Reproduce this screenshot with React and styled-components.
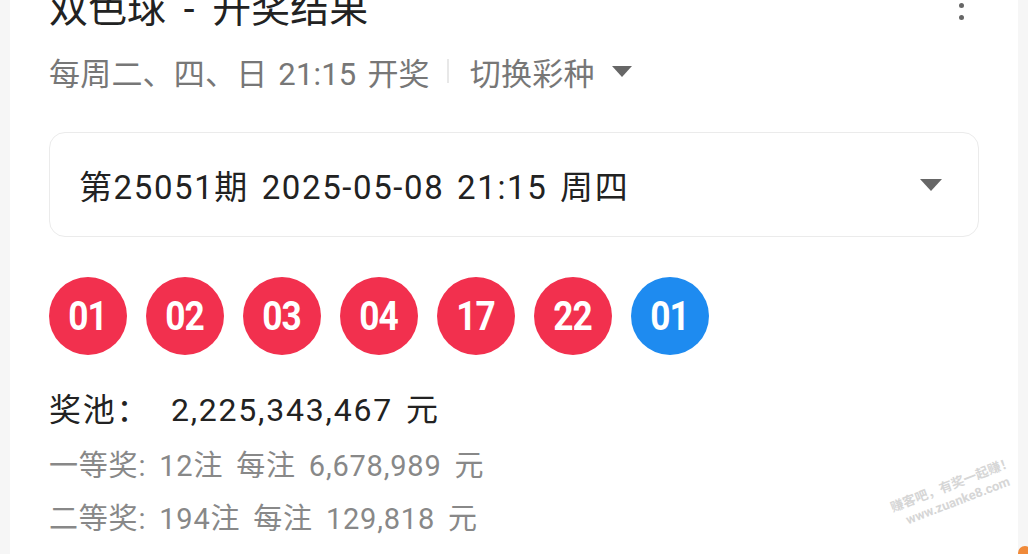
import React from "react";
import styled, { createGlobalStyle } from "styled-components";

const GlobalStyle = createGlobalStyle`
  html, body {
    margin: 0;
    padding: 0;
    background: #f6f6f6;
  }
  body {
    font-family: Roboto, "Noto Sans CJK SC", "Noto Sans", sans-serif;
  }
`;

const Frame = styled.div`
  position: relative;
  width: 1028px;
  height: 554px;
  overflow: hidden;
  padding: 0 10px;
  box-sizing: border-box;
  background: #f6f6f6;
`;

const Card = styled.div`
  position: relative;
  height: 100%;
  background: #fff;
  padding: 0 39px;
  display: flex;
  flex-direction: column;
`;

const TitleRow = styled.div`
  display: flex;
  align-items: center;
  justify-content: space-between;
  margin-top: -10px;
  height: 39px;
`;

const Title = styled.h1`
  margin: 0;
  font-size: 39px;
  line-height: 39px;
  font-weight: 400;
  color: #222;
  word-spacing: 8px;
`;

const MoreDots = styled.div`
  display: flex;
  flex-direction: column;
  gap: 7px;
  margin-right: 15px;
  margin-top: -8px;
  & > span {
    width: 5px;
    height: 5px;
    border-radius: 50%;
    background: #666;
  }
`;

const SubRow = styled.div`
  display: flex;
  align-items: center;
  margin-top: 22px;
  height: 40px;
  font-size: 31px;
  color: #777;
  letter-spacing: 0.2px;
  word-spacing: 3px;
  white-space: pre;
`;

const Divider = styled.span`
  width: 2px;
  height: 24px;
  background: #e8e8e8;
  margin: 0 21px 0 17px;
`;

const Caret = styled.span`
  display: inline-block;
  width: 0;
  height: 0;
  border-top: ${({ size }) => size * 0.55}px solid #666;
  border-left: ${({ size }) => size / 2}px solid transparent;
  border-right: ${({ size }) => size / 2}px solid transparent;
  margin-left: ${({ gap }) => gap}px;
`;

const Select = styled.div`
  margin-top: 41px;
  height: 105px;
  box-sizing: border-box;
  border: 1px solid #ebebeb;
  border-radius: 16px;
  display: flex;
  align-items: center;
  justify-content: space-between;
  padding: 0 36px 0 29px;
  font-size: 33px;
  color: #222;
  letter-spacing: 1.6px;
  word-spacing: 3px;
  white-space: pre;
`;

const Balls = styled.div`
  display: flex;
  gap: 19px;
  margin-top: 40px;
`;

const Ball = styled.div`
  width: 78px;
  height: 78px;
  border-radius: 50%;
  background: ${({ blue }) => (blue ? "#1e8bf0" : "#f2304e")};
  color: #fff;
  display: flex;
  align-items: center;
  justify-content: center;
  font-size: 41px;
  font-weight: 700;
  letter-spacing: -1px;
  & > span {
    display: inline-block;
    transform: scaleX(0.86);
  }
`;

const Pool = styled.div`
  margin-top: 35px;
  height: 40px;
  line-height: 40px;
  font-size: 32px;
  color: #222;
  white-space: pre;
  letter-spacing: 1.8px;
  word-spacing: 0.5px;
  & > em {
    font-style: normal;
    margin-left: 13px;
  }
`;

const PrizeList = styled.div`
  margin-top: 10px;
`;

const Prize = styled.div`
  height: 53px;
  line-height: 53px;
  font-size: 29px;
  color: #888;
  white-space: pre;
  letter-spacing: 0.8px;
  word-spacing: 5px;
`;

const Watermark = styled.div`
  position: absolute;
  left: 878px;
  top: 500px;
  transform: rotate(-21deg);
  transform-origin: left top;
  color: #d6d6d6;
  font-size: 13px;
  font-weight: 700;
  line-height: 17px;
  text-align: center;
  white-space: nowrap;
  pointer-events: none;
`;

const Corner = styled.div`
  position: absolute;
  right: -4px;
  bottom: -6px;
  width: 14px;
  height: 14px;
  border-radius: 50%;
  background: #f08a3a;
`;

const balls = ["01", "02", "03", "04", "17", "22"];

export default function App() {
  return (
    <>
      <GlobalStyle />
      <Frame>
        <Card>
          <TitleRow>
            <Title>双色球 - 开奖结果</Title>
            <MoreDots>
              <span />
              <span />
              <span />
            </MoreDots>
          </TitleRow>
          <SubRow>
            每周二、四、日 21:15 开奖
            <Divider />
            切换彩种
            <Caret size={20} gap={17} />
          </SubRow>
          <Select>
            <span>第25051期 2025-05-08 21:15 周四</span>
            <Caret size={22} gap={0} />
          </Select>
          <Balls>
            {balls.map((n, i) => (
              <Ball key={i}>
                <span>{n}</span>
              </Ball>
            ))}
            <Ball blue>
              <span>01</span>
            </Ball>
          </Balls>
          <Pool>
            奖池：  2,225,343,467<em>元</em>
          </Pool>
          <PrizeList>
            <Prize>一等奖: 12注 每注 6,678,989 元</Prize>
            <Prize>二等奖: 194注 每注 129,818 元</Prize>
          </PrizeList>
          <Watermark>
            赚客吧，有奖一起赚！
            <br />
            www.zuanke8.com
          </Watermark>
        </Card>
        <Corner />
      </Frame>
    </>
  );
}
